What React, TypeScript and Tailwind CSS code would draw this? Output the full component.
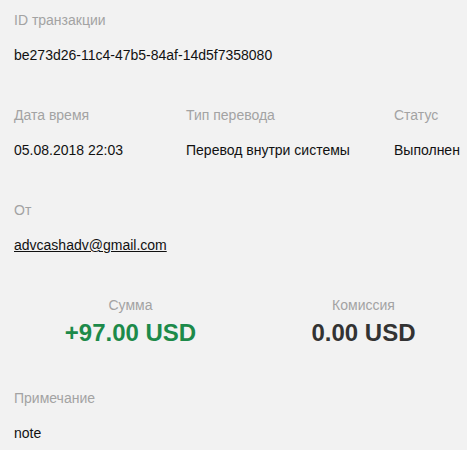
const font = { fontFamily: '"Liberation Sans", Arial, sans-serif' };

function Field({ label, children }: { label: string; children: React.ReactNode }) {
    return (
        <div>
            <div className="text-[14px] leading-5 text-[#a3a3a3]">{label}</div>
            <div className="mt-[15px] text-[14px] leading-5 text-[#111111]">{children}</div>
        </div>
    );
}

export default function App() {
    return (
        <div className="min-h-[450px] w-[467px] overflow-hidden bg-[#f2f2f2] px-[14px] pt-[10px]" style={font}>
            <Field label="ID транзакции">be273d26-11c4-47b5-84af-14d5f7358080</Field>

            <div className="mt-10 grid grid-cols-[172px_208px_auto]">
                <Field label="Дата время">05.08.2018 22:03</Field>
                <Field label="Тип перевода">Перевод внутри системы</Field>
                <Field label="Статус">Выполнен</Field>
            </div>

            <div className="mt-10">
                <Field label="От">
                    <a href="#" className="underline">advcashadv@gmail.com</a>
                </Field>
            </div>

            <div className="mt-10 grid w-[466px] grid-cols-2 text-center">
                <div>
                    <div className="text-[14px] leading-5 text-[#a3a3a3]">Сумма</div>
                    <div className="mt-[6px] text-[24px] font-bold leading-none text-[#1d8a4a]">+97.00 USD</div>
                </div>
                <div>
                    <div className="text-[14px] leading-5 text-[#a3a3a3]">Комиссия</div>
                    <div className="mt-[6px] text-[24px] font-bold leading-none text-[#333333]">0.00 USD</div>
                </div>
            </div>

            <div className="mt-[43px]">
                <Field label="Примечание">note</Field>
            </div>
        </div>
    );
}
